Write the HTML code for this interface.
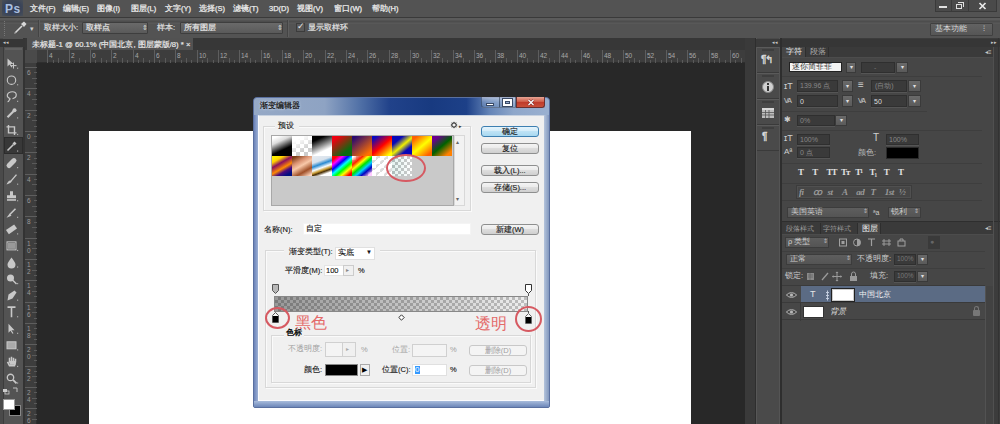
<!DOCTYPE html><html><head><meta charset="utf-8"><style>
*{margin:0;padding:0;box-sizing:border-box}
html,body{width:1000px;height:424px;overflow:hidden}
body{background:#535353;font-family:"Liberation Sans",sans-serif;font-size:9px;color:#d8d8d8;position:relative}
.a{position:absolute}
.t{position:absolute;white-space:nowrap;line-height:1}
</style></head><body><div class="a" style="left:0px;top:0px;width:1000px;height:18px;background:#535353"></div>
<div class="a" style="left:0px;top:17px;width:1000px;height:1px;background:#3a3a3a"></div>
<div class="a" style="left:0px;top:18px;width:1000px;height:1px;background:#5e5e5e"></div>
<div class="a" style="left:2px;top:0px;width:21px;height:16px;background:radial-gradient(ellipse at center,#34405c 0%,#3a4458 60%,#4a5058 100%)"></div>
<div class="t" style="left:5px;top:2.5px;font-size:12px;color:#a9bfe0;font-weight:bold;letter-spacing:0.5px">Ps</div>
<div class="t" style="left:30px;top:4.5px;font-size:7.5px;color:#ececec;-webkit-text-stroke:0.25px #ececec">文件(F)</div>
<div class="t" style="left:63px;top:4.5px;font-size:7.5px;color:#ececec;-webkit-text-stroke:0.25px #ececec">编辑(E)</div>
<div class="t" style="left:97px;top:4.5px;font-size:7.5px;color:#ececec;-webkit-text-stroke:0.25px #ececec">图像(I)</div>
<div class="t" style="left:131px;top:4.5px;font-size:7.5px;color:#ececec;-webkit-text-stroke:0.25px #ececec">图层(L)</div>
<div class="t" style="left:165px;top:4.5px;font-size:7.5px;color:#ececec;-webkit-text-stroke:0.25px #ececec">文字(Y)</div>
<div class="t" style="left:199px;top:4.5px;font-size:7.5px;color:#ececec;-webkit-text-stroke:0.25px #ececec">选择(S)</div>
<div class="t" style="left:233px;top:4.5px;font-size:7.5px;color:#ececec;-webkit-text-stroke:0.25px #ececec">滤镜(T)</div>
<div class="t" style="left:269px;top:4.5px;font-size:7.5px;color:#ececec;-webkit-text-stroke:0.25px #ececec">3D(D)</div>
<div class="t" style="left:297px;top:4.5px;font-size:7.5px;color:#ececec;-webkit-text-stroke:0.25px #ececec">视图(V)</div>
<div class="t" style="left:334px;top:4.5px;font-size:7.5px;color:#ececec;-webkit-text-stroke:0.25px #ececec">窗口(W)</div>
<div class="t" style="left:372px;top:4.5px;font-size:7.5px;color:#ececec;-webkit-text-stroke:0.25px #ececec">帮助(H)</div>
<div class="a" style="left:935px;top:0px;width:62px;height:12px;background:#4a4a4a;border:1px solid #3a3a3a;border-top:none"></div>
<div class="a" style="left:951px;top:0px;width:1px;height:12px;background:#3a3a3a"></div>
<div class="a" style="left:968px;top:0px;width:1px;height:12px;background:#3a3a3a"></div>
<div class="a" style="left:939px;top:6px;width:8px;height:2px;background:#e0e0e0"></div>
<div class="a" style="left:956px;top:4px;width:6px;height:5px;border:1px solid #e0e0e0"></div>
<div class="a" style="left:958px;top:2px;width:6px;height:5px;border:1px solid #e0e0e0;border-left:none;border-bottom:none"></div>
<svg class="a" style="left:978px;top:2px" width="9" height="8"><path d="M1.5 1l6 6M7.5 1l-6 6" stroke="#e8e8e8" stroke-width="1.7"/></svg>
<div class="a" style="left:0px;top:19px;width:1000px;height:19px;background:#535353"></div>
<div class="a" style="left:0px;top:18px;width:1000px;height:2px;background:#5b5b5b"></div>
<div class="a" style="left:0px;top:21px;width:1000px;height:1px;background:#4d4d4d"></div>
<div class="a" style="left:0px;top:23px;width:1000px;height:1px;background:#585858"></div>
<div class="a" style="left:4px;top:21px;width:2px;height:15px;border-left:1px dotted #777"></div>
<svg class="a" style="left:12px;top:20px" width="16" height="16"><path d="M3,13 L10,6" stroke="#d8d8d8" stroke-width="1.6"/><path d="M9,4 L12,1.5 L14.5,4 L12,7 Z" fill="#d8d8d8"/><path d="M2.5,13.5 L4,12" stroke="#aaa" stroke-width="1"/></svg>
<div class="t" style="left:30px;top:25px;font-size:7px;color:#cfcfcf">▾</div>
<div class="a" style="left:38px;top:20px;width:1px;height:17px;background:#444"></div>
<div class="a" style="left:39px;top:20px;width:1px;height:17px;background:#5e5e5e"></div>
<div class="t" style="left:44px;top:24px;font-size:7.7px;-webkit-text-stroke:0.2px #e0e0e0;color:#e0e0e0">取样大小:</div>
<div class="a" style="left:82px;top:22px;width:66px;height:12px;background:linear-gradient(#6a6a6a,#5a5a5a);border:1px solid #3e3e3e;border-radius:1px"></div>
<div class="t" style="left:86px;top:24px;font-size:7.7px;-webkit-text-stroke:0.2px #e0e0e0;color:#eeeeee">取样点</div>
<div class="t" style="left:142px;top:24px;font-size:7px;color:#ddd">⇕</div>
<div class="t" style="left:157px;top:24px;font-size:7.7px;-webkit-text-stroke:0.2px #e0e0e0;color:#e0e0e0">样本:</div>
<div class="a" style="left:180px;top:22px;width:103px;height:12px;background:linear-gradient(#6a6a6a,#5a5a5a);border:1px solid #3e3e3e;border-radius:1px"></div>
<div class="t" style="left:184px;top:24px;font-size:7.7px;-webkit-text-stroke:0.2px #e0e0e0;color:#eeeeee">所有图层</div>
<div class="t" style="left:277px;top:24px;font-size:7px;color:#ddd">⇕</div>
<div class="a" style="left:287px;top:20px;width:1px;height:17px;background:#444"></div>
<div class="a" style="left:288px;top:20px;width:1px;height:17px;background:#5e5e5e"></div>
<div class="a" style="left:296px;top:23px;width:9px;height:9px;background:#5a5a5a;border:1px solid #3c3c3c"></div>
<div class="t" style="left:297px;top:22px;font-size:9px;color:#e8e8e8">✓</div>
<div class="t" style="left:308px;top:24px;font-size:7.7px;-webkit-text-stroke:0.2px #e0e0e0;color:#e8e8e8">显示取样环</div>
<div class="a" style="left:930px;top:23px;width:63px;height:13px;background:linear-gradient(#626262,#565656);border:1px solid #404040;border-radius:1px"></div>
<div class="t" style="left:935px;top:25px;font-size:8px;color:#d8d8d8">基本功能</div>
<div class="t" style="left:983px;top:25px;font-size:8px;color:#ccc">⁝</div>
<div class="a" style="left:25px;top:38px;width:720px;height:12px;background:#373737"></div>
<div class="a" style="left:27px;top:38px;width:166px;height:13px;background:#525252"></div>
<div class="t" style="left:32px;top:41px;font-size:7.7px;color:#e8e8e8;-webkit-text-stroke:0.2px #e8e8e8">未标题-1 @ 60.1% (中国北京, 图层蒙版/8) * ×</div>
<div class="a" style="left:25px;top:50px;width:720px;height:13px;background:#3d3d3d;border-bottom:1px solid #2e2e2e"></div><div class="a" style="left:25px;top:63px;width:12px;height:361px;background:#3d3d3d;border-right:1px solid #2e2e2e"></div><div class="a" style="left:25px;top:50px;width:12px;height:13px;background:#4a4a4a"></div><div class="a" style="left:47px;top:50px;width:1px;height:13px;background:#5e5e5e"></div><div class="t" style="left:49px;top:53px;font-size:6.5px;color:#a8a8a8">4</div><div class="a" style="left:53px;top:60px;width:1px;height:3px;background:#5a5a5a"></div><div class="a" style="left:58px;top:58px;width:1px;height:5px;background:#5a5a5a"></div><div class="a" style="left:63px;top:60px;width:1px;height:3px;background:#5a5a5a"></div><div class="a" style="left:69px;top:50px;width:1px;height:13px;background:#5e5e5e"></div><div class="t" style="left:71px;top:53px;font-size:6.5px;color:#a8a8a8">2</div><div class="a" style="left:74px;top:60px;width:1px;height:3px;background:#5a5a5a"></div><div class="a" style="left:79px;top:58px;width:1px;height:5px;background:#5a5a5a"></div><div class="a" style="left:85px;top:60px;width:1px;height:3px;background:#5a5a5a"></div><div class="a" style="left:90px;top:50px;width:1px;height:13px;background:#5e5e5e"></div><div class="t" style="left:92px;top:53px;font-size:6.5px;color:#a8a8a8">0</div><div class="a" style="left:95px;top:60px;width:1px;height:3px;background:#5a5a5a"></div><div class="a" style="left:101px;top:58px;width:1px;height:5px;background:#5a5a5a"></div><div class="a" style="left:106px;top:60px;width:1px;height:3px;background:#5a5a5a"></div><div class="a" style="left:111px;top:50px;width:1px;height:13px;background:#5e5e5e"></div><div class="t" style="left:113px;top:53px;font-size:6.5px;color:#a8a8a8">2</div><div class="a" style="left:117px;top:60px;width:1px;height:3px;background:#5a5a5a"></div><div class="a" style="left:122px;top:58px;width:1px;height:5px;background:#5a5a5a"></div><div class="a" style="left:127px;top:60px;width:1px;height:3px;background:#5a5a5a"></div><div class="a" style="left:133px;top:50px;width:1px;height:13px;background:#5e5e5e"></div><div class="t" style="left:135px;top:53px;font-size:6.5px;color:#a8a8a8">4</div><div class="a" style="left:138px;top:60px;width:1px;height:3px;background:#5a5a5a"></div><div class="a" style="left:143px;top:58px;width:1px;height:5px;background:#5a5a5a"></div><div class="a" style="left:149px;top:60px;width:1px;height:3px;background:#5a5a5a"></div><div class="a" style="left:154px;top:50px;width:1px;height:13px;background:#5e5e5e"></div><div class="t" style="left:156px;top:53px;font-size:6.5px;color:#a8a8a8">6</div><div class="a" style="left:159px;top:60px;width:1px;height:3px;background:#5a5a5a"></div><div class="a" style="left:165px;top:58px;width:1px;height:5px;background:#5a5a5a"></div><div class="a" style="left:170px;top:60px;width:1px;height:3px;background:#5a5a5a"></div><div class="a" style="left:175px;top:50px;width:1px;height:13px;background:#5e5e5e"></div><div class="t" style="left:177px;top:53px;font-size:6.5px;color:#a8a8a8">8</div><div class="a" style="left:181px;top:60px;width:1px;height:3px;background:#5a5a5a"></div><div class="a" style="left:186px;top:58px;width:1px;height:5px;background:#5a5a5a"></div><div class="a" style="left:191px;top:60px;width:1px;height:3px;background:#5a5a5a"></div><div class="a" style="left:197px;top:50px;width:1px;height:13px;background:#5e5e5e"></div><div class="t" style="left:199px;top:53px;font-size:6.5px;color:#a8a8a8">10</div><div class="a" style="left:202px;top:60px;width:1px;height:3px;background:#5a5a5a"></div><div class="a" style="left:207px;top:58px;width:1px;height:5px;background:#5a5a5a"></div><div class="a" style="left:213px;top:60px;width:1px;height:3px;background:#5a5a5a"></div><div class="a" style="left:218px;top:50px;width:1px;height:13px;background:#5e5e5e"></div><div class="t" style="left:220px;top:53px;font-size:6.5px;color:#a8a8a8">12</div><div class="a" style="left:223px;top:60px;width:1px;height:3px;background:#5a5a5a"></div><div class="a" style="left:229px;top:58px;width:1px;height:5px;background:#5a5a5a"></div><div class="a" style="left:234px;top:60px;width:1px;height:3px;background:#5a5a5a"></div><div class="a" style="left:239px;top:50px;width:1px;height:13px;background:#5e5e5e"></div><div class="t" style="left:241px;top:53px;font-size:6.5px;color:#a8a8a8">14</div><div class="a" style="left:245px;top:60px;width:1px;height:3px;background:#5a5a5a"></div><div class="a" style="left:250px;top:58px;width:1px;height:5px;background:#5a5a5a"></div><div class="a" style="left:255px;top:60px;width:1px;height:3px;background:#5a5a5a"></div><div class="a" style="left:261px;top:50px;width:1px;height:13px;background:#5e5e5e"></div><div class="t" style="left:263px;top:53px;font-size:6.5px;color:#a8a8a8">16</div><div class="a" style="left:266px;top:60px;width:1px;height:3px;background:#5a5a5a"></div><div class="a" style="left:271px;top:58px;width:1px;height:5px;background:#5a5a5a"></div><div class="a" style="left:277px;top:60px;width:1px;height:3px;background:#5a5a5a"></div><div class="a" style="left:282px;top:50px;width:1px;height:13px;background:#5e5e5e"></div><div class="t" style="left:284px;top:53px;font-size:6.5px;color:#a8a8a8">18</div><div class="a" style="left:287px;top:60px;width:1px;height:3px;background:#5a5a5a"></div><div class="a" style="left:293px;top:58px;width:1px;height:5px;background:#5a5a5a"></div><div class="a" style="left:298px;top:60px;width:1px;height:3px;background:#5a5a5a"></div><div class="a" style="left:303px;top:50px;width:1px;height:13px;background:#5e5e5e"></div><div class="t" style="left:305px;top:53px;font-size:6.5px;color:#a8a8a8">20</div><div class="a" style="left:309px;top:60px;width:1px;height:3px;background:#5a5a5a"></div><div class="a" style="left:314px;top:58px;width:1px;height:5px;background:#5a5a5a"></div><div class="a" style="left:319px;top:60px;width:1px;height:3px;background:#5a5a5a"></div><div class="a" style="left:325px;top:50px;width:1px;height:13px;background:#5e5e5e"></div><div class="t" style="left:327px;top:53px;font-size:6.5px;color:#a8a8a8">22</div><div class="a" style="left:330px;top:60px;width:1px;height:3px;background:#5a5a5a"></div><div class="a" style="left:335px;top:58px;width:1px;height:5px;background:#5a5a5a"></div><div class="a" style="left:341px;top:60px;width:1px;height:3px;background:#5a5a5a"></div><div class="a" style="left:346px;top:50px;width:1px;height:13px;background:#5e5e5e"></div><div class="t" style="left:348px;top:53px;font-size:6.5px;color:#a8a8a8">24</div><div class="a" style="left:351px;top:60px;width:1px;height:3px;background:#5a5a5a"></div><div class="a" style="left:357px;top:58px;width:1px;height:5px;background:#5a5a5a"></div><div class="a" style="left:362px;top:60px;width:1px;height:3px;background:#5a5a5a"></div><div class="a" style="left:367px;top:50px;width:1px;height:13px;background:#5e5e5e"></div><div class="t" style="left:369px;top:53px;font-size:6.5px;color:#a8a8a8">26</div><div class="a" style="left:373px;top:60px;width:1px;height:3px;background:#5a5a5a"></div><div class="a" style="left:378px;top:58px;width:1px;height:5px;background:#5a5a5a"></div><div class="a" style="left:383px;top:60px;width:1px;height:3px;background:#5a5a5a"></div><div class="a" style="left:389px;top:50px;width:1px;height:13px;background:#5e5e5e"></div><div class="t" style="left:391px;top:53px;font-size:6.5px;color:#a8a8a8">28</div><div class="a" style="left:394px;top:60px;width:1px;height:3px;background:#5a5a5a"></div><div class="a" style="left:399px;top:58px;width:1px;height:5px;background:#5a5a5a"></div><div class="a" style="left:405px;top:60px;width:1px;height:3px;background:#5a5a5a"></div><div class="a" style="left:410px;top:50px;width:1px;height:13px;background:#5e5e5e"></div><div class="t" style="left:412px;top:53px;font-size:6.5px;color:#a8a8a8">30</div><div class="a" style="left:415px;top:60px;width:1px;height:3px;background:#5a5a5a"></div><div class="a" style="left:421px;top:58px;width:1px;height:5px;background:#5a5a5a"></div><div class="a" style="left:426px;top:60px;width:1px;height:3px;background:#5a5a5a"></div><div class="a" style="left:431px;top:50px;width:1px;height:13px;background:#5e5e5e"></div><div class="t" style="left:433px;top:53px;font-size:6.5px;color:#a8a8a8">32</div><div class="a" style="left:437px;top:60px;width:1px;height:3px;background:#5a5a5a"></div><div class="a" style="left:442px;top:58px;width:1px;height:5px;background:#5a5a5a"></div><div class="a" style="left:447px;top:60px;width:1px;height:3px;background:#5a5a5a"></div><div class="a" style="left:453px;top:50px;width:1px;height:13px;background:#5e5e5e"></div><div class="t" style="left:455px;top:53px;font-size:6.5px;color:#a8a8a8">34</div><div class="a" style="left:458px;top:60px;width:1px;height:3px;background:#5a5a5a"></div><div class="a" style="left:463px;top:58px;width:1px;height:5px;background:#5a5a5a"></div><div class="a" style="left:469px;top:60px;width:1px;height:3px;background:#5a5a5a"></div><div class="a" style="left:474px;top:50px;width:1px;height:13px;background:#5e5e5e"></div><div class="t" style="left:476px;top:53px;font-size:6.5px;color:#a8a8a8">36</div><div class="a" style="left:479px;top:60px;width:1px;height:3px;background:#5a5a5a"></div><div class="a" style="left:485px;top:58px;width:1px;height:5px;background:#5a5a5a"></div><div class="a" style="left:490px;top:60px;width:1px;height:3px;background:#5a5a5a"></div><div class="a" style="left:495px;top:50px;width:1px;height:13px;background:#5e5e5e"></div><div class="t" style="left:497px;top:53px;font-size:6.5px;color:#a8a8a8">38</div><div class="a" style="left:501px;top:60px;width:1px;height:3px;background:#5a5a5a"></div><div class="a" style="left:506px;top:58px;width:1px;height:5px;background:#5a5a5a"></div><div class="a" style="left:511px;top:60px;width:1px;height:3px;background:#5a5a5a"></div><div class="a" style="left:517px;top:50px;width:1px;height:13px;background:#5e5e5e"></div><div class="t" style="left:519px;top:53px;font-size:6.5px;color:#a8a8a8">40</div><div class="a" style="left:522px;top:60px;width:1px;height:3px;background:#5a5a5a"></div><div class="a" style="left:527px;top:58px;width:1px;height:5px;background:#5a5a5a"></div><div class="a" style="left:533px;top:60px;width:1px;height:3px;background:#5a5a5a"></div><div class="a" style="left:538px;top:50px;width:1px;height:13px;background:#5e5e5e"></div><div class="t" style="left:540px;top:53px;font-size:6.5px;color:#a8a8a8">42</div><div class="a" style="left:543px;top:60px;width:1px;height:3px;background:#5a5a5a"></div><div class="a" style="left:549px;top:58px;width:1px;height:5px;background:#5a5a5a"></div><div class="a" style="left:554px;top:60px;width:1px;height:3px;background:#5a5a5a"></div><div class="a" style="left:559px;top:50px;width:1px;height:13px;background:#5e5e5e"></div><div class="t" style="left:561px;top:53px;font-size:6.5px;color:#a8a8a8">44</div><div class="a" style="left:565px;top:60px;width:1px;height:3px;background:#5a5a5a"></div><div class="a" style="left:570px;top:58px;width:1px;height:5px;background:#5a5a5a"></div><div class="a" style="left:575px;top:60px;width:1px;height:3px;background:#5a5a5a"></div><div class="a" style="left:581px;top:50px;width:1px;height:13px;background:#5e5e5e"></div><div class="t" style="left:583px;top:53px;font-size:6.5px;color:#a8a8a8">46</div><div class="a" style="left:586px;top:60px;width:1px;height:3px;background:#5a5a5a"></div><div class="a" style="left:591px;top:58px;width:1px;height:5px;background:#5a5a5a"></div><div class="a" style="left:597px;top:60px;width:1px;height:3px;background:#5a5a5a"></div><div class="a" style="left:602px;top:50px;width:1px;height:13px;background:#5e5e5e"></div><div class="t" style="left:604px;top:53px;font-size:6.5px;color:#a8a8a8">48</div><div class="a" style="left:607px;top:60px;width:1px;height:3px;background:#5a5a5a"></div><div class="a" style="left:613px;top:58px;width:1px;height:5px;background:#5a5a5a"></div><div class="a" style="left:618px;top:60px;width:1px;height:3px;background:#5a5a5a"></div><div class="a" style="left:623px;top:50px;width:1px;height:13px;background:#5e5e5e"></div><div class="t" style="left:625px;top:53px;font-size:6.5px;color:#a8a8a8">50</div><div class="a" style="left:629px;top:60px;width:1px;height:3px;background:#5a5a5a"></div><div class="a" style="left:634px;top:58px;width:1px;height:5px;background:#5a5a5a"></div><div class="a" style="left:639px;top:60px;width:1px;height:3px;background:#5a5a5a"></div><div class="a" style="left:645px;top:50px;width:1px;height:13px;background:#5e5e5e"></div><div class="t" style="left:647px;top:53px;font-size:6.5px;color:#a8a8a8">52</div><div class="a" style="left:650px;top:60px;width:1px;height:3px;background:#5a5a5a"></div><div class="a" style="left:655px;top:58px;width:1px;height:5px;background:#5a5a5a"></div><div class="a" style="left:661px;top:60px;width:1px;height:3px;background:#5a5a5a"></div><div class="a" style="left:666px;top:50px;width:1px;height:13px;background:#5e5e5e"></div><div class="t" style="left:668px;top:53px;font-size:6.5px;color:#a8a8a8">54</div><div class="a" style="left:671px;top:60px;width:1px;height:3px;background:#5a5a5a"></div><div class="a" style="left:677px;top:58px;width:1px;height:5px;background:#5a5a5a"></div><div class="a" style="left:682px;top:60px;width:1px;height:3px;background:#5a5a5a"></div><div class="a" style="left:687px;top:50px;width:1px;height:13px;background:#5e5e5e"></div><div class="t" style="left:689px;top:53px;font-size:6.5px;color:#a8a8a8">56</div><div class="a" style="left:693px;top:60px;width:1px;height:3px;background:#5a5a5a"></div><div class="a" style="left:698px;top:58px;width:1px;height:5px;background:#5a5a5a"></div><div class="a" style="left:703px;top:60px;width:1px;height:3px;background:#5a5a5a"></div><div class="a" style="left:709px;top:50px;width:1px;height:13px;background:#5e5e5e"></div><div class="t" style="left:711px;top:53px;font-size:6.5px;color:#a8a8a8">58</div><div class="a" style="left:714px;top:60px;width:1px;height:3px;background:#5a5a5a"></div><div class="a" style="left:719px;top:58px;width:1px;height:5px;background:#5a5a5a"></div><div class="a" style="left:725px;top:60px;width:1px;height:3px;background:#5a5a5a"></div><div class="a" style="left:730px;top:50px;width:1px;height:13px;background:#5e5e5e"></div><div class="t" style="left:732px;top:53px;font-size:6.5px;color:#a8a8a8">60</div><div class="a" style="left:735px;top:60px;width:1px;height:3px;background:#5a5a5a"></div><div class="a" style="left:741px;top:58px;width:1px;height:5px;background:#5a5a5a"></div><div class="a" style="left:25px;top:67px;width:12px;height:1px;background:#5e5e5e"></div><div class="t" style="left:27px;top:69px;font-size:6.5px;color:#9a9a9a;width:7px;word-break:break-all;white-space:normal;line-height:7px">6</div><div class="a" style="left:34px;top:72px;width:3px;height:1px;background:#5a5a5a"></div><div class="a" style="left:32px;top:78px;width:5px;height:1px;background:#5a5a5a"></div><div class="a" style="left:34px;top:83px;width:3px;height:1px;background:#5a5a5a"></div><div class="a" style="left:25px;top:88px;width:12px;height:1px;background:#5e5e5e"></div><div class="t" style="left:27px;top:90px;font-size:6.5px;color:#9a9a9a;width:7px;word-break:break-all;white-space:normal;line-height:7px">4</div><div class="a" style="left:34px;top:94px;width:3px;height:1px;background:#5a5a5a"></div><div class="a" style="left:32px;top:99px;width:5px;height:1px;background:#5a5a5a"></div><div class="a" style="left:34px;top:104px;width:3px;height:1px;background:#5a5a5a"></div><div class="a" style="left:25px;top:110px;width:12px;height:1px;background:#5e5e5e"></div><div class="t" style="left:27px;top:112px;font-size:6.5px;color:#9a9a9a;width:7px;word-break:break-all;white-space:normal;line-height:7px">2</div><div class="a" style="left:34px;top:115px;width:3px;height:1px;background:#5a5a5a"></div><div class="a" style="left:32px;top:120px;width:5px;height:1px;background:#5a5a5a"></div><div class="a" style="left:34px;top:126px;width:3px;height:1px;background:#5a5a5a"></div><div class="a" style="left:25px;top:131px;width:12px;height:1px;background:#5e5e5e"></div><div class="t" style="left:27px;top:133px;font-size:6.5px;color:#9a9a9a;width:7px;word-break:break-all;white-space:normal;line-height:7px">0</div><div class="a" style="left:34px;top:136px;width:3px;height:1px;background:#5a5a5a"></div><div class="a" style="left:32px;top:142px;width:5px;height:1px;background:#5a5a5a"></div><div class="a" style="left:34px;top:147px;width:3px;height:1px;background:#5a5a5a"></div><div class="a" style="left:25px;top:152px;width:12px;height:1px;background:#5e5e5e"></div><div class="t" style="left:27px;top:154px;font-size:6.5px;color:#9a9a9a;width:7px;word-break:break-all;white-space:normal;line-height:7px">2</div><div class="a" style="left:34px;top:158px;width:3px;height:1px;background:#5a5a5a"></div><div class="a" style="left:32px;top:163px;width:5px;height:1px;background:#5a5a5a"></div><div class="a" style="left:34px;top:168px;width:3px;height:1px;background:#5a5a5a"></div><div class="a" style="left:25px;top:174px;width:12px;height:1px;background:#5e5e5e"></div><div class="t" style="left:27px;top:176px;font-size:6.5px;color:#9a9a9a;width:7px;word-break:break-all;white-space:normal;line-height:7px">4</div><div class="a" style="left:34px;top:179px;width:3px;height:1px;background:#5a5a5a"></div><div class="a" style="left:32px;top:184px;width:5px;height:1px;background:#5a5a5a"></div><div class="a" style="left:34px;top:190px;width:3px;height:1px;background:#5a5a5a"></div><div class="a" style="left:25px;top:195px;width:12px;height:1px;background:#5e5e5e"></div><div class="t" style="left:27px;top:197px;font-size:6.5px;color:#9a9a9a;width:7px;word-break:break-all;white-space:normal;line-height:7px">6</div><div class="a" style="left:34px;top:200px;width:3px;height:1px;background:#5a5a5a"></div><div class="a" style="left:32px;top:206px;width:5px;height:1px;background:#5a5a5a"></div><div class="a" style="left:34px;top:211px;width:3px;height:1px;background:#5a5a5a"></div><div class="a" style="left:25px;top:216px;width:12px;height:1px;background:#5e5e5e"></div><div class="t" style="left:27px;top:218px;font-size:6.5px;color:#9a9a9a;width:7px;word-break:break-all;white-space:normal;line-height:7px">8</div><div class="a" style="left:34px;top:222px;width:3px;height:1px;background:#5a5a5a"></div><div class="a" style="left:32px;top:227px;width:5px;height:1px;background:#5a5a5a"></div><div class="a" style="left:34px;top:232px;width:3px;height:1px;background:#5a5a5a"></div><div class="a" style="left:25px;top:238px;width:12px;height:1px;background:#5e5e5e"></div><div class="t" style="left:27px;top:240px;font-size:6.5px;color:#9a9a9a;width:7px;word-break:break-all;white-space:normal;line-height:7px">10</div><div class="a" style="left:34px;top:243px;width:3px;height:1px;background:#5a5a5a"></div><div class="a" style="left:32px;top:248px;width:5px;height:1px;background:#5a5a5a"></div><div class="a" style="left:34px;top:254px;width:3px;height:1px;background:#5a5a5a"></div><div class="a" style="left:25px;top:259px;width:12px;height:1px;background:#5e5e5e"></div><div class="t" style="left:27px;top:261px;font-size:6.5px;color:#9a9a9a;width:7px;word-break:break-all;white-space:normal;line-height:7px">12</div><div class="a" style="left:34px;top:264px;width:3px;height:1px;background:#5a5a5a"></div><div class="a" style="left:32px;top:270px;width:5px;height:1px;background:#5a5a5a"></div><div class="a" style="left:34px;top:275px;width:3px;height:1px;background:#5a5a5a"></div><div class="a" style="left:25px;top:280px;width:12px;height:1px;background:#5e5e5e"></div><div class="t" style="left:27px;top:282px;font-size:6.5px;color:#9a9a9a;width:7px;word-break:break-all;white-space:normal;line-height:7px">14</div><div class="a" style="left:34px;top:286px;width:3px;height:1px;background:#5a5a5a"></div><div class="a" style="left:32px;top:291px;width:5px;height:1px;background:#5a5a5a"></div><div class="a" style="left:34px;top:296px;width:3px;height:1px;background:#5a5a5a"></div><div class="a" style="left:25px;top:302px;width:12px;height:1px;background:#5e5e5e"></div><div class="t" style="left:27px;top:304px;font-size:6.5px;color:#9a9a9a;width:7px;word-break:break-all;white-space:normal;line-height:7px">16</div><div class="a" style="left:34px;top:307px;width:3px;height:1px;background:#5a5a5a"></div><div class="a" style="left:32px;top:312px;width:5px;height:1px;background:#5a5a5a"></div><div class="a" style="left:34px;top:318px;width:3px;height:1px;background:#5a5a5a"></div><div class="a" style="left:25px;top:323px;width:12px;height:1px;background:#5e5e5e"></div><div class="t" style="left:27px;top:325px;font-size:6.5px;color:#9a9a9a;width:7px;word-break:break-all;white-space:normal;line-height:7px">18</div><div class="a" style="left:34px;top:328px;width:3px;height:1px;background:#5a5a5a"></div><div class="a" style="left:32px;top:334px;width:5px;height:1px;background:#5a5a5a"></div><div class="a" style="left:34px;top:339px;width:3px;height:1px;background:#5a5a5a"></div><div class="a" style="left:25px;top:344px;width:12px;height:1px;background:#5e5e5e"></div><div class="t" style="left:27px;top:346px;font-size:6.5px;color:#9a9a9a;width:7px;word-break:break-all;white-space:normal;line-height:7px">20</div><div class="a" style="left:34px;top:350px;width:3px;height:1px;background:#5a5a5a"></div><div class="a" style="left:32px;top:355px;width:5px;height:1px;background:#5a5a5a"></div><div class="a" style="left:34px;top:360px;width:3px;height:1px;background:#5a5a5a"></div><div class="a" style="left:25px;top:366px;width:12px;height:1px;background:#5e5e5e"></div><div class="t" style="left:27px;top:368px;font-size:6.5px;color:#9a9a9a;width:7px;word-break:break-all;white-space:normal;line-height:7px">22</div><div class="a" style="left:34px;top:371px;width:3px;height:1px;background:#5a5a5a"></div><div class="a" style="left:32px;top:376px;width:5px;height:1px;background:#5a5a5a"></div><div class="a" style="left:34px;top:382px;width:3px;height:1px;background:#5a5a5a"></div><div class="a" style="left:25px;top:387px;width:12px;height:1px;background:#5e5e5e"></div><div class="t" style="left:27px;top:389px;font-size:6.5px;color:#9a9a9a;width:7px;word-break:break-all;white-space:normal;line-height:7px">24</div><div class="a" style="left:34px;top:392px;width:3px;height:1px;background:#5a5a5a"></div><div class="a" style="left:32px;top:398px;width:5px;height:1px;background:#5a5a5a"></div><div class="a" style="left:34px;top:403px;width:3px;height:1px;background:#5a5a5a"></div><div class="a" style="left:25px;top:408px;width:12px;height:1px;background:#5e5e5e"></div><div class="t" style="left:27px;top:410px;font-size:6.5px;color:#9a9a9a;width:7px;word-break:break-all;white-space:normal;line-height:7px">26</div><div class="a" style="left:34px;top:414px;width:3px;height:1px;background:#5a5a5a"></div><div class="a" style="left:32px;top:419px;width:5px;height:1px;background:#5a5a5a"></div>
<div class="a" style="left:37px;top:63px;width:708px;height:361px;background:#282828"></div>
<div class="a" style="left:89px;top:131px;width:602px;height:293px;background:#ffffff"></div>
<div class="a" style="left:0px;top:38px;width:25px;height:386px;background:#535353"></div>
<div class="a" style="left:0px;top:38px;width:3px;height:386px;background:#4a4a4a"></div>
<div class="a" style="left:3px;top:47px;width:1px;height:377px;background:#3c3c3c"></div>
<div class="a" style="left:5px;top:48px;width:17px;height:2px;background:#606060"></div>
<div class="a" style="left:23px;top:38px;width:2px;height:386px;background:#333"></div>
<div class="a" style="left:0px;top:39px;width:25px;height:8px;background:#363636"></div>
<div class="t" style="left:3px;top:40px;font-size:5px;color:#c8c8c8">◂◂</div>
<svg class="a" style="left:0;top:0" width="25" height="424"><rect x="4.5" y="137.5" width="18" height="16" fill="#383838" stroke="#2c2c2c" stroke-width="1"/><g transform="translate(11.5,63.6)"><path d="M-4,-5 L-4,3 L-2,1 L0,4 L1,3.5 L-1,0.5 L2,0.5 Z" fill="#c8c8c8"/><path d="M2,-1 v6 M-1,2 h6" stroke="#c8c8c8" stroke-width="1" fill="none"/></g><rect x="17" y="67.6" width="1.2" height="1.2" fill="#aaa"/><g transform="translate(11.5,80.17)"><circle cx="0" cy="0" r="4.2" fill="none" stroke="#c8c8c8" stroke-width="1.1"/></g><rect x="17" y="84.17" width="1.2" height="1.2" fill="#aaa"/><g transform="translate(11.5,96.74000000000001)"><path d="M-1,2 C-6,1 -5,-5 1,-5 C6,-5 6,1 1,2 M-1,2 C-3,3 -2,5 -4,5" fill="none" stroke="#c8c8c8" stroke-width="1.2"/></g><rect x="17" y="100.74000000000001" width="1.2" height="1.2" fill="#aaa"/><g transform="translate(11.5,113.31)"><path d="M-4,4 L2,-2" stroke="#c8c8c8" stroke-width="2.2"/><circle cx="3" cy="-3" r="2" fill="#c8c8c8"/></g><rect x="17" y="117.31" width="1.2" height="1.2" fill="#aaa"/><g transform="translate(11.5,129.88)"><path d="M-3,-5 V3 H5 M-5,-3 H3 V5" fill="none" stroke="#c8c8c8" stroke-width="1.4"/></g><rect x="17" y="133.88" width="1.2" height="1.2" fill="#aaa"/><g transform="translate(11.5,146.45)"><path d="M-4,4 L2,-2" stroke="#c8c8c8" stroke-width="1.6"/><path d="M1,-3 L3,-5 L5,-3 L3,-1 Z" fill="#c8c8c8"/></g><rect x="17" y="150.45" width="1.2" height="1.2" fill="#aaa"/><g transform="translate(11.5,163.02)"><rect x="-2.5" y="-6" width="5" height="12" rx="2.5" transform="rotate(45)" fill="#c8c8c8"/></g><rect x="17" y="167.02" width="1.2" height="1.2" fill="#aaa"/><g transform="translate(11.5,179.59)"><path d="M5,-5 L-1,2" stroke="#c8c8c8" stroke-width="1.4"/><path d="M-1,1 C-3,1 -4,3 -5,5 C-2,4 0,3 0,2 Z" fill="#c8c8c8"/></g><rect x="17" y="183.59" width="1.2" height="1.2" fill="#aaa"/><g transform="translate(11.5,196.16)"><path d="M-1.5,-5 h3 v4 h3 v3 h-9 v-3 h3 Z" fill="#c8c8c8"/><rect x="-4.5" y="3" width="9" height="1.6" fill="#c8c8c8"/></g><rect x="17" y="200.16" width="1.2" height="1.2" fill="#aaa"/><g transform="translate(11.5,212.73)"><path d="M4,-4 L-2,2" stroke="#c8c8c8" stroke-width="1.6"/><path d="M-5,5 L-2,1 L0,3 Z" fill="#c8c8c8"/></g><rect x="17" y="216.73" width="1.2" height="1.2" fill="#aaa"/><g transform="translate(11.5,229.29999999999998)"><rect x="-2.5" y="-5" width="5" height="10" transform="rotate(55)" fill="#c8c8c8"/></g><rect x="17" y="233.29999999999998" width="1.2" height="1.2" fill="#aaa"/><g transform="translate(11.5,245.87)"><rect x="-4.5" y="-4" width="9" height="8" fill="none" stroke="#c8c8c8" stroke-width="1"/><rect x="-3.5" y="-3" width="7" height="6" fill="#999"/></g><rect x="17" y="249.87" width="1.2" height="1.2" fill="#aaa"/><g transform="translate(11.5,262.44)"><path d="M0,-5 C2,-2 4,0 4,2 A4,4 0 0 1 -4,2 C-4,0 -2,-2 0,-5 Z" fill="#c8c8c8"/></g><rect x="17" y="266.44" width="1.2" height="1.2" fill="#aaa"/><g transform="translate(11.5,279.01)"><circle cx="-1" cy="-1" r="3.5" fill="#c8c8c8"/><path d="M1,1 L5,5" stroke="#c8c8c8" stroke-width="1.5"/></g><rect x="17" y="283.01" width="1.2" height="1.2" fill="#aaa"/><g transform="translate(11.5,295.58000000000004)"><path d="M-4,5 L-3,-1 L3,-5 L5,-3 L1,3 Z" fill="#c8c8c8"/></g><rect x="17" y="299.58000000000004" width="1.2" height="1.2" fill="#aaa"/><g transform="translate(11.5,312.15000000000003)"><path d="M-4,-5 H4 M0,-5 V5" stroke="#c8c8c8" stroke-width="1.6" fill="none"/></g><rect x="17" y="316.15000000000003" width="1.2" height="1.2" fill="#aaa"/><g transform="translate(11.5,328.72)"><path d="M-3,-5 L-3,4 L-1,2 L1,5 L2,4.5 L0,1.5 L3,1.5 Z" fill="#c8c8c8"/></g><rect x="17" y="332.72" width="1.2" height="1.2" fill="#aaa"/><g transform="translate(11.5,345.29)"><rect x="-4.5" y="-3.5" width="9" height="7" fill="#aaa" stroke="#c8c8c8" stroke-width="1"/></g><rect x="17" y="349.29" width="1.2" height="1.2" fill="#aaa"/><g transform="translate(11.5,361.86)"><path d="M-4,0 L-2,4 H3 L4,0 V-3 M-2,-4 V1 M0,-5 V0 M2,-4 V0 M4,-2 V0" stroke="#c8c8c8" stroke-width="1.5" fill="none"/><rect x="-2" y="-1" width="6" height="4" fill="#c8c8c8"/></g><rect x="17" y="365.86" width="1.2" height="1.2" fill="#aaa"/><g transform="translate(11.5,378.43)"><circle cx="-1" cy="-1" r="3.2" fill="none" stroke="#c8c8c8" stroke-width="1.3"/><path d="M1.5,1.5 L5,5" stroke="#c8c8c8" stroke-width="1.8"/></g><rect x="17" y="382.43" width="1.2" height="1.2" fill="#aaa"/><rect x="3" y="389" width="4" height="3" fill="#ccc"/><rect x="5" y="391" width="4" height="3" fill="none" stroke="#ccc" stroke-width="0.8"/><path d="M13,388 h4 v4" fill="none" stroke="#ccc" stroke-width="0.9"/></svg>
<div class="a" style="left:3px;top:399px;width:12px;height:11px;background:#fff;border:1px solid #888"></div>
<div class="a" style="left:9px;top:405px;width:12px;height:11px;background:#000;border:1px solid #888"></div>
<div class="a" style="left:3px;top:399px;width:12px;height:11px;background:#fff;border:1px solid #999"></div>
<div class="a" style="left:745px;top:38px;width:11px;height:386px;background:#3a3a3a"></div>
<div class="a" style="left:755px;top:38px;width:1px;height:386px;background:#2e2e2e"></div>
<div class="a" style="left:756px;top:38px;width:24px;height:386px;background:#4a4a4a;border-left:1px solid #575757;border-right:1px solid #555"></div>
<div class="a" style="left:756px;top:39px;width:24px;height:8px;background:#3a3a3a"></div>
<div class="a" style="left:780px;top:38px;width:2px;height:386px;background:#2e2e2e"></div>
<div class="a" style="left:782px;top:38px;width:218px;height:386px;background:#3c3c3c"></div>
<div class="a" style="left:782px;top:39px;width:218px;height:8px;background:#363636"></div>
<div class="a" style="left:782px;top:47px;width:211px;height:10px;background:#3a3a3a"></div>
<div class="a" style="left:782px;top:57px;width:211px;height:164px;background:#464646;border-top:1px solid #4c4c4c"></div>
<div class="a" style="left:782px;top:221px;width:218px;height:1px;background:#2e2e2e"></div>
<div class="a" style="left:782px;top:222px;width:211px;height:12px;background:#3a3a3a"></div>
<div class="a" style="left:782px;top:234px;width:211px;height:190px;background:#464646;border-top:1px solid #4c4c4c"></div>
<div class="a" style="left:993px;top:47px;width:1px;height:377px;background:#505050"></div>
<div class="a" style="left:985px;top:286px;width:1px;height:138px;background:#525252"></div>
<div class="a" style="left:986px;top:286px;width:7px;height:138px;background:#424242"></div>
<div class="a" style="left:998px;top:38px;width:1px;height:386px;background:#333"></div>
<div class="t" style="left:772px;top:40px;font-size:5px;color:#c8c8c8">◂◂</div>
<div class="a" style="left:757px;top:47px;width:22px;height:26px;border-bottom:1px solid #3a3a3a;border-top:1px solid #5a5a5a"></div>
<div class="a" style="left:762px;top:49px;width:12px;height:2px;background:#3e3e3e"></div>
<div class="a" style="left:757px;top:73px;width:22px;height:26px;border-bottom:1px solid #3a3a3a;border-top:1px solid #5a5a5a"></div>
<div class="a" style="left:762px;top:75px;width:12px;height:2px;background:#3e3e3e"></div>
<div class="a" style="left:757px;top:99px;width:22px;height:26px;border-bottom:1px solid #3a3a3a;border-top:1px solid #5a5a5a"></div>
<div class="a" style="left:762px;top:101px;width:12px;height:2px;background:#3e3e3e"></div>
<div class="a" style="left:757px;top:125px;width:22px;height:26px;border-bottom:1px solid #3a3a3a;border-top:1px solid #5a5a5a"></div>
<div class="a" style="left:762px;top:127px;width:12px;height:2px;background:#3e3e3e"></div>
<div class="t" style="left:761px;top:55px;font-size:10px;color:#d8d8d8;-webkit-text-stroke:0.4px #d8d8d8;letter-spacing:-1px">¶↰</div>
<svg class="a" style="left:761px;top:80px" width="14" height="14"><circle cx="7" cy="7" r="5.5" fill="#d0d0d0" stroke="#888" stroke-width="1"/><rect x="6" y="3" width="2" height="2" fill="#333"/><rect x="6" y="6" width="2" height="5" fill="#333"/></svg>
<svg class="a" style="left:761px;top:106px" width="14" height="14"><rect x="1" y="3" width="12" height="9" fill="#bdbdbd"/><path d="M1 6.5h12M1 9h12M4.5 3v9M8 3v9" stroke="#555" stroke-width="0.8"/><rect x="1" y="2" width="12" height="2" fill="#d8d8d8"/></svg>
<div class="t" style="left:762px;top:132px;font-size:10px;color:#d8d8d8;-webkit-text-stroke:0.4px #d8d8d8">¶</div>
<div class="t" style="left:991px;top:40px;font-size:5px;color:#c8c8c8">▸▸</div>
<div class="a" style="left:782px;top:47px;width:23px;height:10px;background:#464646"></div>
<div class="t" style="left:786px;top:48px;font-size:8px;color:#f0f0f0">字符</div>
<div class="t" style="left:810px;top:48px;font-size:8px;color:#aaa">段落</div>
<div class="a" style="left:805px;top:47px;width:1px;height:10px;background:#2e2e2e"></div>
<div class="a" style="left:828px;top:47px;width:1px;height:10px;background:#2e2e2e"></div>
<div class="t" style="left:985px;top:49px;font-size:6px;color:#c8c8c8">◂≡</div>
<div class="a" style="left:789px;top:62px;width:53px;height:10px;background:#f4f4f4;border:1px solid #222"></div>
<div class="t" style="left:792px;top:63px;font-size:8px;color:#333">迷你简菲菲</div>
<div class="a" style="left:846px;top:62px;width:10px;height:11px;background:linear-gradient(#6a6a6a,#5a5a5a);border:1px solid #3a3a3a"><div style="text-align:center;line-height:9px;font-size:6px;color:#e0e0e0">▾</div></div>
<div class="a" style="left:861px;top:62px;width:34px;height:11px;background:#3a3a3a;border:1px solid #2f2f2f;box-shadow:0 1px 0 #555"></div>
<div class="t" style="left:874px;top:64px;font-size:7px;color:#777">-</div>
<div class="a" style="left:896px;top:62px;width:12px;height:11px;background:linear-gradient(#6a6a6a,#5a5a5a);border:1px solid #3a3a3a"><div style="text-align:center;line-height:9px;font-size:6px;color:#e0e0e0">▾</div></div>
<div class="a" style="left:782px;top:76px;width:200px;height:1px;background:#3e3e3e"></div>
<div class="t" style="left:784px;top:82px;font-size:9px;color:#cfcfcf;">ɪT</div>
<div class="a" style="left:797px;top:80px;width:41px;height:12px;background:#3a3a3a;border:1px solid #2f2f2f;box-shadow:0 1px 0 #555"></div>
<div class="t" style="left:800px;top:82px;font-size:7px;color:#888">139.96 点</div>
<div class="a" style="left:842px;top:80px;width:11px;height:12px;background:linear-gradient(#6a6a6a,#5a5a5a);border:1px solid #3a3a3a"><div style="text-align:center;line-height:10px;font-size:6px;color:#e0e0e0">▾</div></div>
<div class="t" style="left:858px;top:80px;font-size:10px;color:#cfcfcf;">≡</div>
<div class="a" style="left:871px;top:80px;width:36px;height:12px;background:#3a3a3a;border:1px solid #2f2f2f;box-shadow:0 1px 0 #555"></div>
<div class="t" style="left:875px;top:82px;font-size:7px;color:#888">(自动)</div>
<div class="a" style="left:908px;top:80px;width:13px;height:12px;background:linear-gradient(#6a6a6a,#5a5a5a);border:1px solid #3a3a3a"><div style="text-align:center;line-height:10px;font-size:6px;color:#e0e0e0">▾</div></div>
<div class="t" style="left:784px;top:97px;font-size:7px;color:#cfcfcf;letter-spacing:-1px">VA</div>
<div class="a" style="left:797px;top:95px;width:41px;height:12px;background:#3a3a3a;border:1px solid #2f2f2f;box-shadow:0 1px 0 #555"></div>
<div class="t" style="left:800px;top:98px;font-size:7px;color:#ddd">0</div>
<div class="a" style="left:842px;top:95px;width:11px;height:12px;background:linear-gradient(#6a6a6a,#5a5a5a);border:1px solid #3a3a3a"><div style="text-align:center;line-height:10px;font-size:6px;color:#e0e0e0">▾</div></div>
<div class="t" style="left:858px;top:97px;font-size:7px;color:#cfcfcf;letter-spacing:-1px">VA</div>
<div class="a" style="left:871px;top:95px;width:36px;height:12px;background:#3a3a3a;border:1px solid #2f2f2f;box-shadow:0 1px 0 #555"></div>
<div class="t" style="left:874px;top:98px;font-size:7px;color:#ddd">50</div>
<div class="a" style="left:908px;top:95px;width:13px;height:12px;background:linear-gradient(#6a6a6a,#5a5a5a);border:1px solid #3a3a3a"><div style="text-align:center;line-height:10px;font-size:6px;color:#e0e0e0">▾</div></div>
<div class="a" style="left:782px;top:111px;width:145px;height:1px;background:#3e3e3e"></div>
<div class="t" style="left:784px;top:116px;font-size:8px;color:#cfcfcf;">✱</div>
<div class="a" style="left:797px;top:115px;width:38px;height:11px;background:#3a3a3a;border:1px solid #2f2f2f;box-shadow:0 1px 0 #555"></div>
<div class="t" style="left:800px;top:117px;font-size:7px;color:#888">0%</div>
<div class="a" style="left:835px;top:115px;width:12px;height:11px;background:linear-gradient(#6a6a6a,#5a5a5a);border:1px solid #3a3a3a"><div style="text-align:center;line-height:9px;font-size:6px;color:#e0e0e0">▾</div></div>
<div class="a" style="left:782px;top:130px;width:200px;height:1px;background:#3e3e3e"></div>
<div class="t" style="left:784px;top:134px;font-size:9px;color:#cfcfcf;">ɪT</div>
<div class="a" style="left:797px;top:134px;width:33px;height:11px;background:#3a3a3a;border:1px solid #2f2f2f;box-shadow:0 1px 0 #555"></div>
<div class="t" style="left:800px;top:136px;font-size:7px;color:#888">100%</div>
<div class="t" style="left:873px;top:133px;font-size:10px;color:#cfcfcf;">T</div>
<div class="a" style="left:886px;top:134px;width:33px;height:11px;background:#3a3a3a;border:1px solid #2f2f2f;box-shadow:0 1px 0 #555"></div>
<div class="t" style="left:889px;top:136px;font-size:7px;color:#888">100%</div>
<div class="t" style="left:784px;top:148px;font-size:8px;color:#cfcfcf;">Aª</div>
<div class="a" style="left:797px;top:147px;width:33px;height:11px;background:#3a3a3a;border:1px solid #2f2f2f;box-shadow:0 1px 0 #555"></div>
<div class="t" style="left:800px;top:149px;font-size:7px;color:#888">0 点</div>
<div class="t" style="left:858px;top:149px;font-size:7.5px;color:#bbb">颜色:</div>
<div class="a" style="left:886px;top:147px;width:33px;height:12px;background:#000;border:1px solid #2a2a2a"></div>
<div class="a" style="left:782px;top:163px;width:200px;height:1px;background:#3e3e3e"></div>
<div class="t" style="left:798.0px;top:168px;font-size:9px;color:#e0e0e0;font-family:'Liberation Serif',serif;font-weight:bold;letter-spacing:-1px">T</div>
<div class="t" style="left:812.3px;top:168px;font-size:9px;color:#e0e0e0;font-family:'Liberation Serif',serif;font-weight:bold;letter-spacing:-1px">T</div>
<div class="t" style="left:826.6px;top:168px;font-size:9px;color:#e0e0e0;font-family:'Liberation Serif',serif;font-weight:bold;letter-spacing:-1px">TT</div>
<div class="t" style="left:840.9px;top:168px;font-size:9px;color:#e0e0e0;font-family:'Liberation Serif',serif;font-weight:bold;letter-spacing:-1px">Tт</div>
<div class="t" style="left:855.2px;top:168px;font-size:9px;color:#e0e0e0;font-family:'Liberation Serif',serif;font-weight:bold;letter-spacing:-1px">T¹</div>
<div class="t" style="left:869.5px;top:168px;font-size:9px;color:#e0e0e0;font-family:'Liberation Serif',serif;font-weight:bold;letter-spacing:-1px">T₁</div>
<div class="t" style="left:883.8px;top:168px;font-size:9px;color:#e0e0e0;font-family:'Liberation Serif',serif;font-weight:bold;letter-spacing:-1px">T</div>
<div class="t" style="left:898.1px;top:168px;font-size:9px;color:#e0e0e0;font-family:'Liberation Serif',serif;font-weight:bold;letter-spacing:-1px">T</div>
<div class="a" style="left:782px;top:183px;width:200px;height:1px;background:#3e3e3e"></div>
<div class="a" style="left:796px;top:185px;width:116px;height:14px;border:1px solid #3c3c3c;box-shadow:inset 0 0 0 1px #505050"></div>
<div class="t" style="left:799.0px;top:188px;font-size:9px;color:#9a9a9a;font-family:'Liberation Serif',serif;font-style:italic;font-weight:bold;letter-spacing:-0.5px">fi</div>
<div class="t" style="left:813.3px;top:188px;font-size:9px;color:#9a9a9a;font-family:'Liberation Serif',serif;font-style:italic;font-weight:bold;letter-spacing:-0.5px">ꝏ</div>
<div class="t" style="left:827.6px;top:188px;font-size:9px;color:#9a9a9a;font-family:'Liberation Serif',serif;font-style:italic;font-weight:bold;letter-spacing:-0.5px">st</div>
<div class="t" style="left:841.9px;top:188px;font-size:9px;color:#9a9a9a;font-family:'Liberation Serif',serif;font-style:italic;font-weight:bold;letter-spacing:-0.5px">A</div>
<div class="t" style="left:856.2px;top:188px;font-size:9px;color:#9a9a9a;font-family:'Liberation Serif',serif;font-style:italic;font-weight:bold;letter-spacing:-0.5px">ad</div>
<div class="t" style="left:870.5px;top:188px;font-size:9px;color:#9a9a9a;font-family:'Liberation Serif',serif;font-style:italic;font-weight:bold;letter-spacing:-0.5px">T</div>
<div class="t" style="left:884.8px;top:188px;font-size:9px;color:#9a9a9a;font-family:'Liberation Serif',serif;font-style:italic;font-weight:bold;letter-spacing:-0.5px">1st</div>
<div class="t" style="left:899.1px;top:188px;font-size:9px;color:#9a9a9a;font-family:'Liberation Serif',serif;font-style:italic;font-weight:bold;letter-spacing:-0.5px">½</div>
<div class="a" style="left:782px;top:200px;width:200px;height:1px;background:#3e3e3e"></div>
<div class="a" style="left:787px;top:207px;width:82px;height:11px;background:linear-gradient(#5e5e5e,#545454);border:1px solid #3c3c3c"></div>
<div class="t" style="left:791px;top:208px;font-size:8px;color:#ccc">美国英语</div>
<div class="t" style="left:863px;top:208px;font-size:6px;color:#bbb">⇕</div>
<div class="t" style="left:873px;top:209px;font-size:7px;color:#ccc">ªa</div>
<div class="a" style="left:888px;top:207px;width:33px;height:11px;background:linear-gradient(#5e5e5e,#545454);border:1px solid #3c3c3c"></div>
<div class="t" style="left:891px;top:208px;font-size:8px;color:#ccc">锐利</div>
<div class="t" style="left:914px;top:208px;font-size:6px;color:#bbb">⇕</div>
<div class="a" style="left:784px;top:223px;width:34px;height:11px;background:#3a3a3a"></div>
<div class="t" style="left:786px;top:225px;font-size:7px;color:#9c9c9c">段落样式</div>
<div class="a" style="left:820px;top:223px;width:1px;height:11px;background:#2e2e2e"></div>
<div class="t" style="left:823px;top:225px;font-size:7px;color:#9c9c9c">字符样式</div>
<div class="a" style="left:857px;top:223px;width:1px;height:11px;background:#2e2e2e"></div>
<div class="a" style="left:858px;top:223px;width:22px;height:11px;background:#464646"></div>
<div class="t" style="left:862px;top:225px;font-size:7.5px;color:#f0f0f0">图层</div>
<div class="a" style="left:880px;top:223px;width:1px;height:11px;background:#2e2e2e"></div>
<div class="t" style="left:985px;top:225px;font-size:6px;color:#c8c8c8">◂≡</div>
<div class="a" style="left:785px;top:237px;width:44px;height:11px;background:linear-gradient(#5e5e5e,#545454);border:1px solid #3c3c3c"></div>
<div class="t" style="left:788px;top:238px;font-size:7.5px;color:#ccc">ρ 类型</div>
<div class="t" style="left:823px;top:238px;font-size:6px;color:#bbb">⇕</div>
<svg class="a" style="left:838px;top:237px" width="80" height="11"><rect x="1.5" y="2" width="7" height="7" fill="none" stroke="#a0a0a0" stroke-width="1"/><rect x="3.5" y="4" width="3" height="3" fill="#a0a0a0"/><circle cx="19" cy="5.5" r="3.5" fill="none" stroke="#a0a0a0" stroke-width="1"/><path d="M19 2v7a3.5 3.5 0 0 0 0-7z" fill="#a0a0a0"/><path d="M30 2h7M33.5 2v7" stroke="#a0a0a0" stroke-width="1.2"/><path d="M46 2v7M51 2v7M44 4h9M44 7h9" stroke="#a0a0a0" stroke-width="0.9"/><rect x="60" y="4" width="7" height="5" fill="none" stroke="#a0a0a0" stroke-width="1"/><path d="M62 4v-2h3v2" fill="none" stroke="#a0a0a0" stroke-width="1"/></svg>
<div class="a" style="left:928px;top:236px;width:12px;height:13px;background:#3a3a3a"></div>
<div class="t" style="left:930px;top:238px;font-size:7px;color:#666">●</div>
<div class="a" style="left:782px;top:251px;width:203px;height:1px;background:#3e3e3e"></div>
<div class="a" style="left:786px;top:254px;width:66px;height:11px;background:linear-gradient(#5e5e5e,#545454);border:1px solid #3c3c3c"></div>
<div class="t" style="left:790px;top:255px;font-size:7.5px;color:#ccc">正常</div>
<div class="t" style="left:846px;top:255px;font-size:6px;color:#bbb">⇕</div>
<div class="t" style="left:857px;top:255px;font-size:7.5px;color:#ccc">不透明度:</div>
<div class="a" style="left:894px;top:254px;width:22px;height:11px;background:#3a3a3a;border:1px solid #2f2f2f;box-shadow:0 1px 0 #555"></div>
<div class="t" style="left:897px;top:256px;font-size:6.5px;color:#777">100%</div>
<div class="a" style="left:917px;top:254px;width:11px;height:11px;background:linear-gradient(#6a6a6a,#5a5a5a);border:1px solid #3a3a3a"><div style="text-align:center;line-height:9px;font-size:6px;color:#e0e0e0">▾</div></div>
<div class="a" style="left:782px;top:268px;width:203px;height:1px;background:#3e3e3e"></div>
<div class="t" style="left:785px;top:272px;font-size:7.5px;color:#ccc">锁定:</div>
<svg class="a" style="left:805px;top:271px" width="60" height="11"><rect x="2" y="2" width="7" height="7" fill="#8a8a8a"/><path d="M3 4h5M3 6h5M5 2v7" stroke="#666" stroke-width="0.8"/><path d="M17 9l6-7" stroke="#9a9a9a" stroke-width="1.3"/><path d="M32 1v9M27.5 5.5h9" stroke="#9a9a9a" stroke-width="1"/><path d="M32 0.5l-1.5 1.5h3zM32 10.5l-1.5-1.5h3zM27 5.5l1.5-1.5v3zM37 5.5l-1.5-1.5v3z" fill="#9a9a9a"/><rect x="45" y="5" width="7" height="5" fill="#9a9a9a"/><path d="M46.5 5v-2a2 2 0 0 1 4 0v2" fill="none" stroke="#9a9a9a" stroke-width="1"/></svg>
<div class="t" style="left:870px;top:272px;font-size:7.5px;color:#ccc">填充:</div>
<div class="a" style="left:894px;top:271px;width:22px;height:11px;background:#3a3a3a;border:1px solid #2f2f2f;box-shadow:0 1px 0 #555"></div>
<div class="t" style="left:897px;top:273px;font-size:6.5px;color:#777">100%</div>
<div class="a" style="left:917px;top:271px;width:11px;height:11px;background:linear-gradient(#6a6a6a,#5a5a5a);border:1px solid #3a3a3a"><div style="text-align:center;line-height:9px;font-size:6px;color:#e0e0e0">▾</div></div>
<div class="a" style="left:782px;top:285px;width:203px;height:1px;background:#3a3a3a"></div>
<div class="a" style="left:782px;top:286px;width:19px;height:17px;background:#474747;border-bottom:1px solid #3a3a3a"></div>
<svg class="a" style="left:786px;top:291px" width="11" height="8"><path d="M0.5 4C2.5 1 8.5 1 10.5 4C8.5 7 2.5 7 0.5 4Z" fill="none" stroke="#b8b8b8" stroke-width="1"/><circle cx="5.5" cy="4" r="1.6" fill="#b8b8b8"/></svg>
<div class="a" style="left:801px;top:286px;width:184px;height:17px;background:#5b6b84;border-bottom:1px solid #3a3a3a"></div>
<div class="t" style="left:810px;top:290px;font-size:9px;color:#e6e6e6">T</div>
<svg class="a" style="left:825px;top:290px" width="5" height="11"><path d="M2.5 0.5v10M1 2.5h3M1 5.5h3M1 8.5h3" stroke="#c8d2e4" stroke-width="0.9"/></svg>
<div class="a" style="left:831px;top:288px;width:24px;height:14px;background:#fff;border:1px solid #222;box-shadow:inset 0 0 0 1px #ccc"></div>
<div class="t" style="left:859px;top:291px;font-size:8px;color:#f0f0f0">中国北京</div>
<div class="a" style="left:782px;top:303px;width:203px;height:17px;background:#474747;border-bottom:1px solid #3a3a3a"></div>
<div class="a" style="left:782px;top:303px;width:19px;height:18px;border-right:1px solid #3a3a3a"></div>
<svg class="a" style="left:786px;top:308px" width="11" height="8"><path d="M0.5 4C2.5 1 8.5 1 10.5 4C8.5 7 2.5 7 0.5 4Z" fill="none" stroke="#b8b8b8" stroke-width="1"/><circle cx="5.5" cy="4" r="1.6" fill="#b8b8b8"/></svg>
<div class="a" style="left:803px;top:306px;width:21px;height:12px;background:#fff;border:1px solid #333"></div>
<div class="t" style="left:830px;top:308px;font-size:8px;color:#e0e0e0;font-style:italic">背景</div>
<div class="a" style="left:973px;top:310px;width:7px;height:6px;background:#777;border-radius:1px"></div>
<div class="a" style="left:974px;top:306px;width:5px;height:5px;border:1px solid #777;border-bottom:none;border-radius:3px 3px 0 0"></div>
<div class="a" style="left:253px;top:97px;width:297px;height:311px;background:#8ea3c8;border:1px solid #5a70a0;border-radius:4px 4px 2px 2px"></div>
<div class="a" style="left:254px;top:98px;width:295px;height:17px;border-radius:4px 4px 0 0;background:linear-gradient(90deg,#96a9c6 0%,#8ea3c3 24%,#5070a6 36%,#21428a 46%,#183a80 60%,#1d4088 72%,#6686b8 80%,#8fa7ca 88%,#9ab0d0 100%)"></div>
<div class="a" style="left:254px;top:115px;width:4px;height:292px;background:linear-gradient(90deg,#6c83b9,#9cb0d4)"></div>
<div class="a" style="left:544px;top:115px;width:5px;height:292px;background:linear-gradient(90deg,#b4c4dc,#8297bd)"></div>
<div class="a" style="left:254px;top:401px;width:295px;height:6px;background:linear-gradient(#a8bcdc,#6d87b9)"></div>
<div class="t" style="left:260px;top:101.5px;font-size:7.5px;color:#151515;-webkit-text-stroke:0.25px #151515;text-shadow:0 0 3px #dde6f2,0 0 2px #dde6f2">渐变编辑器</div>
<div class="a" style="left:481px;top:97px;width:19px;height:11px;background:linear-gradient(rgba(255,255,255,0.45),rgba(200,215,235,0.25) 50%,rgba(120,150,190,0.3));border:1px solid rgba(40,60,90,0.55);border-top:none;border-radius:0 0 0 3px"></div>
<div class="a" style="left:486px;top:103px;width:8px;height:3px;background:#fff;border:1px solid #3a4a66"></div>
<div class="a" style="left:499px;top:97px;width:17px;height:11px;background:linear-gradient(rgba(255,255,255,0.45),rgba(200,215,235,0.25) 50%,rgba(120,150,190,0.3));border:1px solid rgba(40,60,90,0.55);border-top:none"></div>
<div class="a" style="left:503px;top:99px;width:9px;height:7px;border:2px solid #fff;box-shadow:0 0 0 1px #3a4a66,inset 0 0 0 1px #3a4a66"></div>
<div class="a" style="left:516px;top:97px;width:29px;height:11px;background:linear-gradient(#e8a595,#d0604c 45%,#c03c2c 55%,#c8503a);border:1px solid #6b3030;border-top:none;border-radius:0 0 3px 0"></div>
<svg class="a" style="left:527px;top:99px" width="8" height="7"><path d="M1.5 1l5 5M6.5 1l-5 5" stroke="#7a2a2a" stroke-width="2.4"/><path d="M1.5 1l5 5M6.5 1l-5 5" stroke="#fff" stroke-width="1.3"/></svg>
<div class="a" style="left:258px;top:115px;width:286px;height:286px;background:#f0f0f0;border-left:1px solid #fbfbfd;border-bottom:1px solid #fbfbfd;border-top:1px solid #c8d2e0"></div>
<div class="a" style="left:263px;top:126px;width:208px;height:85px;border:1px solid #d8d8d8;box-shadow:inset 1px 1px 0 #fafafa,1px 1px 0 #fafafa"></div>
<div class="a" style="left:275px;top:121px;width:24px;height:10px;background:#f0f0f0"></div>
<div class="t" style="left:278px;top:122px;font-size:7.5px;color:#111;-webkit-text-stroke:0.12px #222">预设</div>
<svg class="a" style="left:450px;top:121px" width="8" height="8"><circle cx="4" cy="4" r="2.2" fill="none" stroke="#444" stroke-width="1.2"/><path d="M4 0.8v1.2M4 6v1.2M0.8 4h1.2M6 4h1.2M1.7 1.7l0.8 0.8M5.5 5.5l0.8 0.8M1.7 6.3l0.8-0.8M5.5 2.5l0.8-0.8" stroke="#444" stroke-width="0.9"/></svg>
<div class="t" style="left:459px;top:124px;font-size:5px;color:#333">▸</div>
<div class="a" style="left:271px;top:135px;width:183px;height:71px;background:#c9c9c9;border:1px solid #a8a8a8"></div>
<div class="a" style="left:454px;top:135px;width:11px;height:71px;background:#f2f2f2;border:1px solid #d8d8d8"></div>
<div class="t" style="left:456px;top:139px;font-size:6px;color:#666">▴</div>
<div class="t" style="left:456px;top:196px;font-size:6px;color:#666">▾</div>
<div class="a" style="left:272px;top:136px;width:20px;height:20px;background:linear-gradient(155deg,#fff 10%,#ddd 30%,#000 65%)"></div>
<div class="a" style="left:292px;top:136px;width:20px;height:20px;background-color:#fff;background-image:linear-gradient(150deg,#fff 20%,rgba(255,255,255,0) 70%),linear-gradient(45deg,#cdcdcd 25%,transparent 25%,transparent 75%,#cdcdcd 75%),linear-gradient(45deg,#cdcdcd 25%,transparent 25%,transparent 75%,#cdcdcd 75%);background-size:100% 100%,8px 8px,8px 8px;background-position:0 0,0 0,4px 4px"></div>
<div class="a" style="left:312px;top:136px;width:20px;height:20px;background:linear-gradient(155deg,#000 20%,#fff 70%)"></div>
<div class="a" style="left:332px;top:136px;width:20px;height:20px;background:linear-gradient(140deg,#ee0010 15%,#0a6a10 75%)"></div>
<div class="a" style="left:352px;top:136px;width:20px;height:20px;background:linear-gradient(140deg,#2a0a70 10%,#ff7000 85%)"></div>
<div class="a" style="left:372px;top:136px;width:20px;height:20px;background:linear-gradient(140deg,#0808c0 10%,#ff0000 50%,#ffff00 90%)"></div>
<div class="a" style="left:392px;top:136px;width:20px;height:20px;background:linear-gradient(140deg,#0808b8 25%,#f0f000 50%,#0808b8 72%)"></div>
<div class="a" style="left:412px;top:136px;width:20px;height:20px;background:linear-gradient(140deg,#ff6000 12%,#ffff00 50%,#ff6000 88%)"></div>
<div class="a" style="left:432px;top:136px;width:20px;height:20px;background:linear-gradient(140deg,#6a0090 15%,#006000 50%,#ff8000 85%)"></div>
<div class="a" style="left:272px;top:156px;width:20px;height:20px;background:linear-gradient(150deg,#ffef00 10%,#ffd000 22%,#8a1060 38%,#ff8a00 58%,#4a0a80 72%,#001080 88%)"></div>
<div class="a" style="left:292px;top:156px;width:20px;height:20px;background:linear-gradient(150deg,#7a3a14 8%,#d89070 30%,#f8c8a8 48%,#a05028 72%,#ffd8c0 95%)"></div>
<div class="a" style="left:312px;top:156px;width:20px;height:20px;background:linear-gradient(160deg,#e8ecf0 0%,#d8e2ec 28%,#2a8ad0 42%,#f8fcff 56%,#c89a30 66%,#4a3008 73%,#ffffff 84%)"></div>
<div class="a" style="left:332px;top:156px;width:20px;height:20px;background:linear-gradient(140deg,#ff0000 12%,#ff00ff 25%,#0000ff 38%,#00ffff 50%,#00ff00 62%,#ffff00 75%,#ff0000 90%)"></div>
<div class="a" style="left:352px;top:156px;width:20px;height:20px;background-color:#fff;background-image:linear-gradient(140deg,rgba(255,255,255,0) 5%,#ff2000 25%,#ffff00 38%,#00e000 50%,#00d0ff 62%,#0000c0 75%,rgba(255,0,255,0.2) 90%),linear-gradient(45deg,#cdcdcd 25%,transparent 25%,transparent 75%,#cdcdcd 75%),linear-gradient(45deg,#cdcdcd 25%,transparent 25%,transparent 75%,#cdcdcd 75%);background-size:100% 100%,8px 8px,8px 8px;background-position:0 0,0 0,4px 4px"></div>
<div class="a" style="left:372px;top:156px;width:20px;height:20px;background-color:#fff;background-image:repeating-linear-gradient(140deg,#fff 0px,#fff 3px,rgba(255,255,255,0.3) 4px,rgba(255,255,255,0.3) 6px),linear-gradient(45deg,#cdcdcd 25%,transparent 25%,transparent 75%,#cdcdcd 75%),linear-gradient(45deg,#cdcdcd 25%,transparent 25%,transparent 75%,#cdcdcd 75%);background-size:100% 100%,8px 8px,8px 8px;background-position:0 0,0 0,4px 4px"></div>
<div class="a" style="left:392px;top:156px;width:20px;height:20px;background-color:#fff;background-image:linear-gradient(90deg,rgba(140,200,190,0.25),rgba(255,255,255,0.3)),linear-gradient(45deg,#b8b8b8 25%,transparent 25%,transparent 75%,#b8b8b8 75%),linear-gradient(45deg,#b8b8b8 25%,transparent 25%,transparent 75%,#b8b8b8 75%);background-size:100% 100%,6px 6px,6px 6px;background-position:0 0,0 0,3px 3px"></div>
<div class="a" style="left:386px;top:154px;width:40px;height:28px;border:2px solid #d65a62;border-radius:50%"></div>
<div class="a" style="left:481px;top:126px;width:58px;height:11px;background:linear-gradient(#f4f4f4 0%,#ebebeb 45%,#dddddd 50%,#cfcfcf 100%);border:1px solid #8e8f8f;border-radius:3px;border-color:#3c7fb1;background:linear-gradient(#e5f4fc 0%,#d3ecf9 45%,#bde2f5 50%,#a8d8f0 100%)"><div style="text-align:center;line-height:9px;font-size:7.5px;color:#111;-webkit-text-stroke:0.12px #222">确定</div></div>
<div class="a" style="left:481px;top:143px;width:58px;height:11px;background:linear-gradient(#f4f4f4 0%,#ebebeb 45%,#dddddd 50%,#cfcfcf 100%);border:1px solid #8e8f8f;border-radius:3px;"><div style="text-align:center;line-height:9px;font-size:7.5px;color:#111;-webkit-text-stroke:0.12px #222">复位</div></div>
<div class="a" style="left:481px;top:165px;width:58px;height:11px;background:linear-gradient(#f4f4f4 0%,#ebebeb 45%,#dddddd 50%,#cfcfcf 100%);border:1px solid #8e8f8f;border-radius:3px;"><div style="text-align:center;line-height:9px;font-size:7.5px;color:#111;-webkit-text-stroke:0.12px #222">载入(L)...</div></div>
<div class="a" style="left:481px;top:182px;width:58px;height:11px;background:linear-gradient(#f4f4f4 0%,#ebebeb 45%,#dddddd 50%,#cfcfcf 100%);border:1px solid #8e8f8f;border-radius:3px;"><div style="text-align:center;line-height:9px;font-size:7.5px;color:#111;-webkit-text-stroke:0.12px #222">存储(S)...</div></div>
<div class="a" style="left:481px;top:224px;width:58px;height:11px;background:linear-gradient(#f4f4f4 0%,#ebebeb 45%,#dddddd 50%,#cfcfcf 100%);border:1px solid #8e8f8f;border-radius:3px;"><div style="text-align:center;line-height:9px;font-size:7.5px;color:#111;-webkit-text-stroke:0.12px #222">新建(W)</div></div>
<div class="t" style="left:264px;top:226px;font-size:7.5px;color:#111;-webkit-text-stroke:0.12px #222">名称(N):</div>
<div class="a" style="left:303px;top:223px;width:168px;height:12px;background:#fff;border:1px solid #f4f4f4"></div>
<div class="t" style="left:306px;top:225px;font-size:7.5px;color:#111;-webkit-text-stroke:0.12px #222">自定</div>
<div class="a" style="left:265px;top:250px;width:271px;height:138px;border:1px solid #d8d8d8;box-shadow:inset 1px 1px 0 #fafafa,1px 1px 0 #fafafa"></div>
<div class="a" style="left:284px;top:244px;width:96px;height:14px;background:#f0f0f0"></div>
<div class="t" style="left:289px;top:248px;font-size:7.5px;color:#111;-webkit-text-stroke:0.12px #222">渐变类型(T):</div>
<div class="a" style="left:335px;top:247px;width:40px;height:13px;background:#fff;border:1px solid #e0e0e0"></div>
<div class="t" style="left:338px;top:249px;font-size:7.5px;color:#111;-webkit-text-stroke:0.12px #222">实底</div>
<div class="t" style="left:366px;top:249px;font-size:6px;color:#111;-webkit-text-stroke:0.12px #222">▼</div>
<div class="t" style="left:285px;top:267px;font-size:7.5px;color:#111;-webkit-text-stroke:0.12px #222">平滑度(M):</div>
<div class="a" style="left:324px;top:265px;width:20px;height:11px;background:#fff;border:1px solid #e4e4e4"></div>
<div class="t" style="left:326px;top:267px;font-size:7.5px;color:#111;-webkit-text-stroke:0.12px #222">100</div>
<div class="a" style="left:343px;top:265px;width:11px;height:11px;background:#f0f0f0;border:1px solid #ccc"></div>
<div class="t" style="left:346px;top:267px;font-size:6px;color:#888">▸</div>
<div class="t" style="left:358px;top:267px;font-size:7.5px;color:#111;-webkit-text-stroke:0.12px #222">%</div>
<svg class="a" style="left:271px;top:283px" width="9" height="12"><path d="M1.5 1.5h6v6l-3 3l-3-3z" fill="#b8b8b8" stroke="#555" stroke-width="1"/></svg>
<svg class="a" style="left:524px;top:283px" width="9" height="12"><path d="M1.5 1.5h6v6l-3 3l-3-3z" fill="#fff" stroke="#333" stroke-width="1"/></svg>
<div class="a" style="left:528px;top:294px;width:1px;height:2px;background:#555"></div>
<div class="a" style="left:274px;top:296px;width:254px;height:16px;background-color:#eeeeee;background-image:linear-gradient(90deg,rgba(0,0,0,0.36),rgba(0,0,0,0.0)),linear-gradient(45deg,#bdbdbd 25%,transparent 25%,transparent 75%,#bdbdbd 75%),linear-gradient(45deg,#bdbdbd 25%,transparent 25%,transparent 75%,#bdbdbd 75%);background-size:100% 100%,6px 6px,6px 6px;background-position:0 0,0 0,3px 3px;border:1px solid #888"></div>
<svg class="a" style="left:271px;top:311px" width="9" height="13"><path d="M4.5 1.5l3 3v7h-6v-7z" fill="#f4f4f4" stroke="#555" stroke-width="1"/><rect x="2" y="5" width="5" height="6" fill="#000"/></svg>
<svg class="a" style="left:524px;top:312px" width="9" height="13"><path d="M4.5 1.5l3 3v7h-6v-7z" fill="#f4f4f4" stroke="#666" stroke-width="1"/><rect x="2" y="5" width="5" height="6" fill="#000"/></svg>
<div class="a" style="left:528px;top:311px;width:1px;height:2px;background:#555"></div>
<svg class="a" style="left:398px;top:314px" width="7" height="7"><path d="M3.5 0.8L6.2 3.5L3.5 6.2L0.8 3.5Z" fill="#fff" stroke="#333" stroke-width="1"/></svg>
<div class="a" style="left:265px;top:307px;width:25px;height:22px;border:2px solid #d65a62;border-radius:50%"></div>
<div class="a" style="left:515px;top:306px;width:27px;height:26px;border:2px solid #d65a62;border-radius:50%"></div>
<div class="t" style="left:295px;top:315px;font-size:16px;color:#e46a6a;font-weight:300">黑色</div>
<div class="t" style="left:475px;top:316px;font-size:16px;color:#e46a6a;font-weight:300">透明</div>
<div class="a" style="left:271px;top:335px;width:260px;height:48px;border:1px solid #d8d8d8;box-shadow:inset 1px 1px 0 #fafafa,1px 1px 0 #fafafa"></div>
<div class="a" style="left:284px;top:329px;width:20px;height:10px;background:#f0f0f0"></div>
<div class="t" style="left:286px;top:329px;font-size:7.5px;color:#000;-webkit-text-stroke:0.3px #000">色标</div>
<div class="t" style="left:288px;top:345px;font-size:7.5px;color:#a0a0a0">不透明度:</div>
<div class="a" style="left:325px;top:342px;width:18px;height:15px;background:#f4f4f4;border:1px solid #d0d0d0"></div>
<div class="a" style="left:342px;top:342px;width:14px;height:15px;background:#f0f0f0;border:1px solid #d0d0d0"></div>
<div class="t" style="left:346px;top:346px;font-size:6px;color:#aaa">▸</div>
<div class="t" style="left:361px;top:346px;font-size:7.5px;color:#a0a0a0">%</div>
<div class="t" style="left:392px;top:346px;font-size:7.5px;color:#a0a0a0">位置:</div>
<div class="a" style="left:412px;top:344px;width:35px;height:13px;background:#f4f4f4;border:1px solid #d0d0d0"></div>
<div class="t" style="left:450px;top:346px;font-size:7.5px;color:#a0a0a0">%</div>
<div class="a" style="left:469px;top:345px;width:58px;height:11px;background:#f4f4f4;border:1px solid #c8c8c8;border-radius:3px"><div style="text-align:center;line-height:9px;font-size:7.5px;color:#a0a0a0">删除(D)</div></div>
<div class="t" style="left:304px;top:366px;font-size:7.5px;color:#111;-webkit-text-stroke:0.12px #222">颜色:</div>
<div class="a" style="left:325px;top:364px;width:33px;height:12px;background:#000;border:1px solid #888"></div>
<div class="a" style="left:360px;top:364px;width:10px;height:12px;background:#f0f0f0;border:1px solid #aaa"></div>
<div class="t" style="left:362px;top:366px;font-size:7px;color:#000">▶</div>
<div class="t" style="left:382px;top:366px;font-size:7.5px;color:#111;-webkit-text-stroke:0.12px #222">位置(C):</div>
<div class="a" style="left:412px;top:364px;width:35px;height:12px;background:#fff;border:1px solid #e0e0e0"></div>
<div class="a" style="left:415px;top:366px;width:5px;height:8px;background:#3399ff"></div>
<div class="t" style="left:415px;top:366px;font-size:8px;color:#fff">0</div>
<div class="t" style="left:450px;top:366px;font-size:7.5px;color:#111;-webkit-text-stroke:0.12px #222">%</div>
<div class="a" style="left:469px;top:365px;width:58px;height:11px;background:#f4f4f4;border:1px solid #c8c8c8;border-radius:3px"><div style="text-align:center;line-height:9px;font-size:7.5px;color:#a0a0a0">删除(D)</div></div></body></html>
